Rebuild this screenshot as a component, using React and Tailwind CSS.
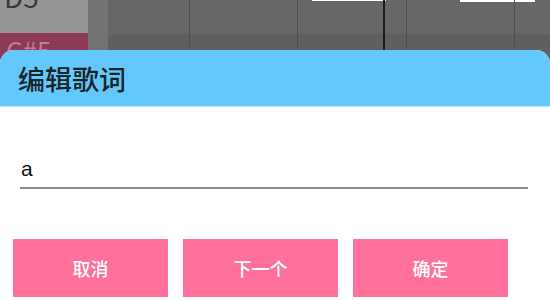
export default function App() {
  const font = { fontFamily: '"Noto Sans CJK SC", "Noto Sans", sans-serif' };
  return (
    <div className="relative w-[550px] h-[300px] overflow-hidden bg-white" style={font}>
      {/* piano roll behind the dialog */}
      <div className="flex h-[300px]">
        <div className="w-[88px] flex flex-col">
          <div className="h-[33px] bg-[#969696] px-[4px] leading-none overflow-hidden">
            <span className="block -mt-[18px] text-[28px] text-[#3a3a3a]">D5</span>
          </div>
          <div className="h-[40px] bg-[#8c3a55] px-[6px] overflow-hidden">
            <span className="block text-[26px] leading-none mt-[4px] text-[#c77b92]">C#5</span>
          </div>
          <div className="flex-1 bg-[#969696]" />
        </div>
        <div className="w-[20px] bg-[#737373]" />
        <div className="flex-1 flex flex-col">
          <div className="relative h-[34px] bg-[#676767] flex">
            <div className="absolute top-0 left-[204px] w-[74px] h-[1px] bg-white" />
            <div className="absolute top-0 left-[352px] w-[75px] h-[2px] bg-white" />
          </div>
          <div className="h-[40px] bg-[#5f5f5f]" />
          <div className="flex-1 bg-[#676767]" />
        </div>
      </div>
      <div className="absolute inset-0 flex pointer-events-none">
        <div className="ml-[189px] w-[1px] h-full bg-[#4e4e4e]" />
        <div className="ml-[107px] w-[1px] h-full bg-[#4e4e4e]" />
        <div className="ml-[85px] w-[2px] h-full bg-[#1e1e1e]" />
        <div className="ml-[21px] w-[1px] h-full bg-[#4e4e4e]" />
        <div className="ml-[107px] w-[1px] h-full bg-[#4e4e4e]" />
      </div>

      {/* dialog */}
      <div className="absolute left-0 right-0 top-[50px] bottom-0 flex flex-col bg-white rounded-t-[14px] overflow-hidden">
        <div className="h-[57px] bg-[#63c8fc] flex items-center pl-[18px] border-b border-[#cfe6f2]">
          <span className="text-[27px] text-[#1b2428] leading-none font-medium">编辑歌词</span>
        </div>
        <div className="px-[20px] pt-[49px]">
          <div className="h-[31px] flex items-end pl-[1px] text-[21px] leading-none text-[#111]" style={{ fontFamily: '"Liberation Sans", Arial, sans-serif' }}>
            <span className="pb-[8px]">a</span>
          </div>
          <div className="w-[508px] h-[2px] bg-[#8d8d8d]" />
        </div>
        <div className="flex gap-[15px] pl-[13px] mt-[50px]">
          {['取消', '下一个', '确定'].map((t) => (
            <div key={t} className="w-[155px] h-[58px] bg-[#ff709b] flex items-center justify-center text-white text-[18px] font-medium">
              {t}
            </div>
          ))}
        </div>
      </div>
    </div>
  );
}
